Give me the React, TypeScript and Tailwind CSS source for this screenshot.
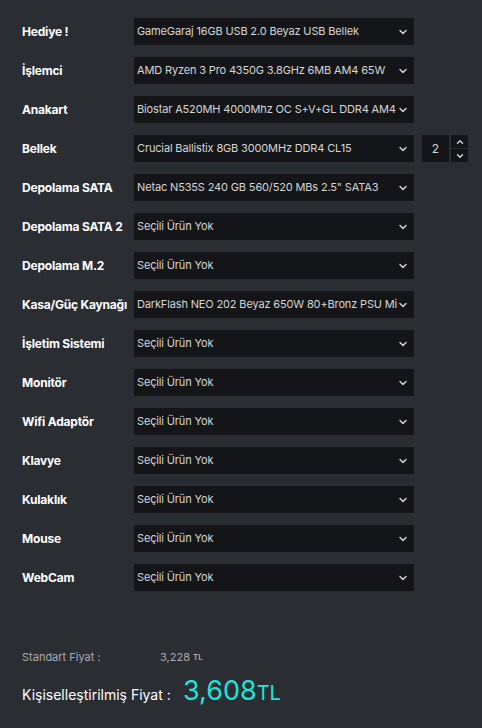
import { ChevronDown, ChevronUp } from "lucide-react";

const rows: { label: string; value: string; qty?: number }[] = [
  { label: "Hediye !", value: "GameGaraj 16GB USB 2.0 Beyaz USB Bellek" },
  { label: "İşlemci", value: "AMD Ryzen 3 Pro 4350G 3.8GHz 6MB AM4 65W" },
  { label: "Anakart", value: "Biostar A520MH 4000Mhz OC S+V+GL DDR4 AM4" },
  { label: "Bellek", value: "Crucial Ballistix 8GB 3000MHz DDR4 CL15", qty: 2 },
  { label: "Depolama SATA", value: 'Netac N535S 240 GB 560/520 MBs 2.5" SATA3' },
  { label: "Depolama SATA 2", value: "Seçili Ürün Yok" },
  { label: "Depolama M.2", value: "Seçili Ürün Yok" },
  { label: "Kasa/Güç Kaynağı", value: "DarkFlash NEO 202 Beyaz 650W 80+Bronz PSU Mid Tower" },
  { label: "İşletim Sistemi", value: "Seçili Ürün Yok" },
  { label: "Monitör", value: "Seçili Ürün Yok" },
  { label: "Wifi Adaptör", value: "Seçili Ürün Yok" },
  { label: "Klavye", value: "Seçili Ürün Yok" },
  { label: "Kulaklık", value: "Seçili Ürün Yok" },
  { label: "Mouse", value: "Seçili Ürün Yok" },
  { label: "WebCam", value: "Seçili Ürün Yok" },
];

export default function App() {
  return (
    <div className="min-h-[728px] w-[482px] bg-[#2a2d32] font-['Inter','Noto_Sans',sans-serif] pl-[22px] pt-[18px]">
      {/* Part rows */}
      <div className="flex flex-col gap-[12px]">
        {rows.map((row) => (
          <div key={row.label} className="flex items-center h-[27px]">
            <div className="w-[112px] shrink-0 text-[12px] font-bold text-white whitespace-nowrap tracking-[-0.2px]">
              {row.label}
            </div>
            <div className="w-[280px] h-[27px] bg-[#141518] flex items-center pl-[3px] pr-[5px]">
              <span className="flex-1 min-w-0 overflow-hidden whitespace-nowrap text-[11px] text-[#d6d6d6] tracking-[-0.15px]">
                {row.value}
              </span>
              <ChevronDown className="w-[12px] h-[12px] text-[#cfcfcf] shrink-0" strokeWidth={3} />
            </div>
            {row.qty !== undefined && (
              <div className="flex items-center ml-[8px] gap-[2px]">
                <div className="w-[27px] h-[27px] bg-[#141518] flex items-center justify-center text-[12px] text-[#d6d6d6]">
                  {row.qty}
                </div>
                <div className="flex flex-col gap-px w-[17px]">
                  <div className="h-[13px] bg-[#141518] flex items-center justify-center">
                    <ChevronUp className="w-[10px] h-[10px] text-[#cfcfcf]" strokeWidth={3.5} />
                  </div>
                  <div className="h-[13px] bg-[#141518] flex items-center justify-center">
                    <ChevronDown className="w-[10px] h-[10px] text-[#cfcfcf]" strokeWidth={3.5} />
                  </div>
                </div>
              </div>
            )}
          </div>
        ))}
      </div>

      {/* Prices */}
      <div className="mt-[58px] flex items-center h-[16px]">
        <span className="w-[138px] text-[11px] text-[#a9abae]">Standart Fiyat :</span>
        <span className="text-[11px] text-[#a9abae]">3,228</span>
        <span className="ml-[3px] text-[8px] font-semibold text-[#a9abae]">TL</span>
      </div>
      <div className="mt-[12px] flex items-baseline">
        <span className="w-[161px] text-[14px] text-white">Kişiselleştirilmiş Fiyat :</span>
        <span className="text-[27px] leading-none text-[#20e3dc]">3,608</span>
        <span className="text-[20px] leading-none text-[#20e3dc]">TL</span>
      </div>
    </div>
  );
}
